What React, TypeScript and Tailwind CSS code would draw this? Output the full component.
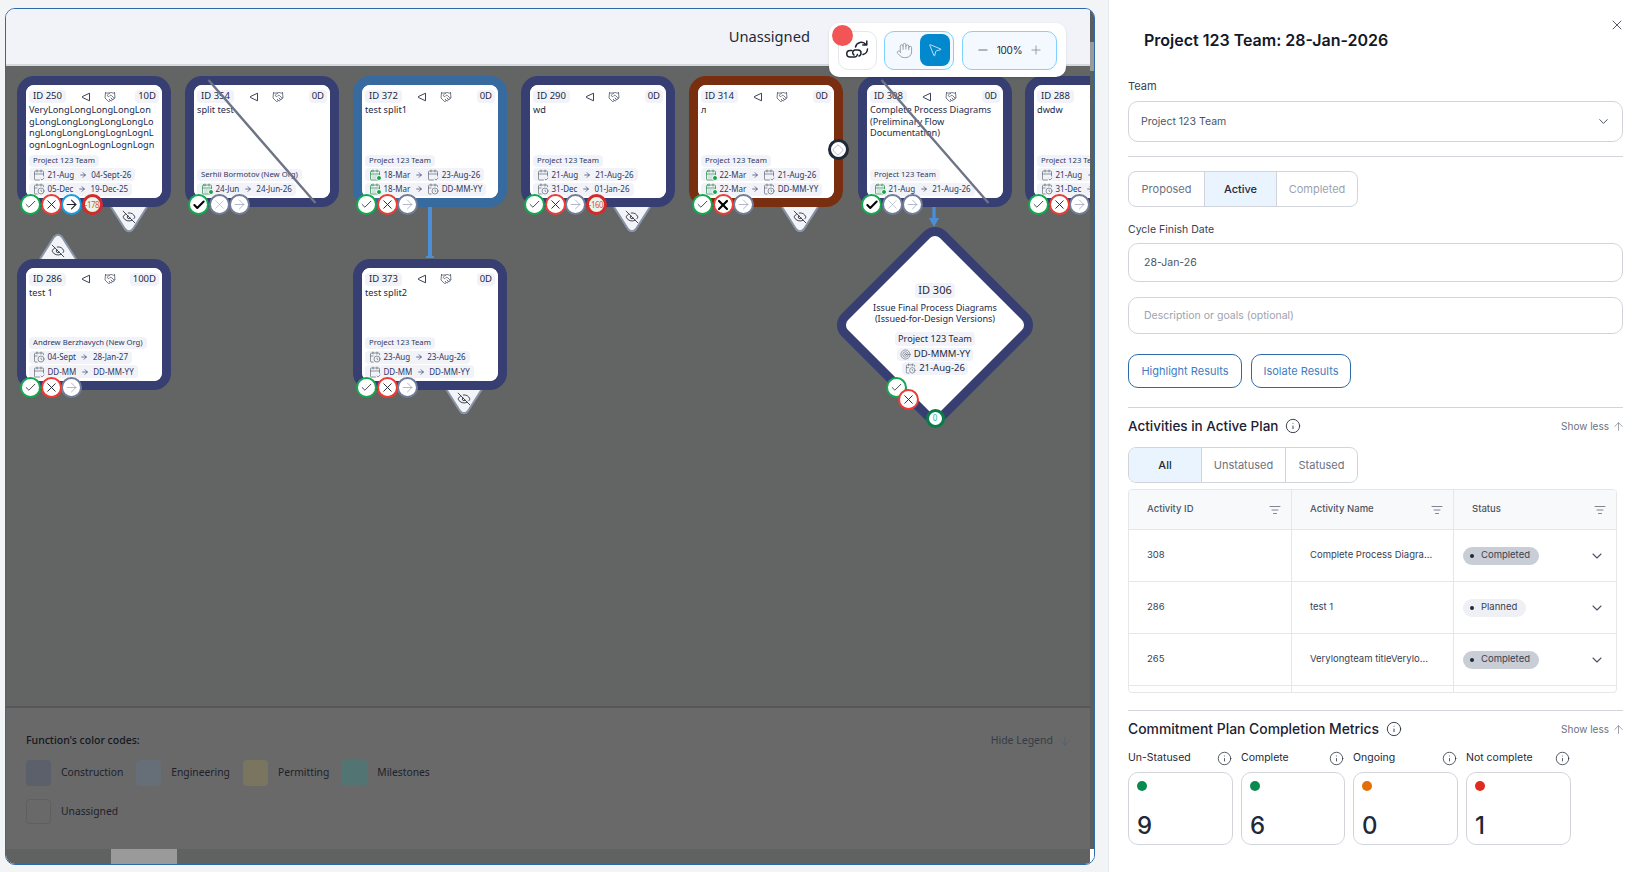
import React from "react";
import { Check, X, ArrowRight, EyeOff, Handshake, CalendarClock, CalendarCheck2, CalendarDays, Hand, MousePointer2, Minus, Plus, Info, ListFilter, ChevronDown, ArrowUp, ArrowDown, Target, Diamond } from "lucide-react";

type CircleKind = "check" | "checkBold" | "x" | "xBold" | "xGhost" | "arrow" | "arrowBlue" | "late";

function Circle({ kind, label }: { kind: CircleKind; label?: string }) {
  if (kind === "late")
    return (
      <div className="w-[21px] h-[21px] rounded-full border-[3px] border-[#d42a2a] bg-[#e6f7ea] flex items-center justify-center text-[8px] tracking-[-0.5px] whitespace-nowrap text-[#e5533d]">
        {label}
      </div>
    );
  const border =
    kind === "check" || kind === "checkBold"
      ? "border-[#12a850]"
      : kind === "x" || kind === "xBold"
        ? "border-[#ef3b33]"
        : kind === "arrowBlue"
          ? "border-[#0f9fe6]"
          : "border-[#717c96]";
  return (
    <div className={`w-[21px] h-[21px] rounded-full border-[2.5px] bg-white flex items-center justify-center ${border}`}>
      {kind === "check" && <Check size={13} strokeWidth={1.5} color="#1f2433" />}
      {kind === "checkBold" && <Check size={14} strokeWidth={3.5} color="#000" />}
      {kind === "x" && <X size={15} strokeWidth={1.5} color="#1f2433" />}
      {kind === "xBold" && <X size={16} strokeWidth={3.2} color="#000" />}
      {kind === "xGhost" && <X size={15} strokeWidth={1.3} color="#b8c0d2" />}
      {kind === "arrow" && <ArrowRight size={15} strokeWidth={1.4} color="#a3aec7" />}
      {kind === "arrowBlue" && <ArrowRight size={15} strokeWidth={1.7} color="#1f2433" />}
    </div>
  );
}

function Tag({ dir }: { dir: "down" | "up" }) {
  return (
    <div className="relative w-[38px] h-[26px]">
      <svg width="38" height="26" viewBox="0 0 38 26" className="absolute inset-0">
        {dir === "down" ? (
          <path d="M1 0 L15 22 Q19 26.5 23 22 L37 0 Z" fill="#f3f4f8" />
        ) : (
          <path d="M1 26 L15 4 Q19 -0.5 23 4 L37 26 Z" fill="#f3f4f8" />
        )}
        {dir === "down" ? (
          <path d="M1 0 L15 22 Q19 26.5 23 22 L37 0" fill="none" stroke="#8a94a8" strokeWidth="2" />
        ) : (
          <path d="M1 26 L15 4 Q19 -0.5 23 4 L37 26" fill="none" stroke="#8a94a8" strokeWidth="2" />
        )}
      </svg>
      <div className={`absolute left-[12px] ${dir === "down" ? "top-[3px]" : "top-[11px]"}`}>
        <EyeOff size={14} strokeWidth={1.4} color="#1f2433" />
      </div>
    </div>
  );
}

function TriIcon() {
  return (
    <svg width="10" height="10" viewBox="0 0 10 10" fill="none">
      <path d="M8.5 1.2 L1.3 4.6 Q0.8 5 1.3 5.4 L8.5 8.8 Z" stroke="#3b4256" strokeWidth="1" strokeLinejoin="round" />
    </svg>
  );
}

function DateIcon({ kind }: { kind: "gray" | "green" | "days" }) {
  if (kind === "green")
    return (
      <span className="relative inline-flex shrink-0">
        <CalendarDays size={12} strokeWidth={1.3} color="#15803d" />
        <span className="absolute right-[-1px] bottom-[0px] w-[6px] h-[6px] rounded-full bg-[#16a34a] border border-white" />
      </span>
    );
  if (kind === "days") return <CalendarClock size={12} strokeWidth={1.2} color="#4b5563" className="shrink-0" />;
  return <CalendarCheck2 size={12} strokeWidth={1.2} color="#4b5563" className="shrink-0" />;
}

type DateRow = { icon: "gray" | "green" | "days"; from: string; icon2?: "gray" | "green" | "days"; to: string };

function Chip({ children, className = "" }: { children: React.ReactNode; className?: string }) {
  return <span className={`inline-flex items-center bg-[#f1f3f8] rounded-[4px] ${className}`}>{children}</span>;
}

function DateChip({ row }: { row: DateRow }) {
  return (
    <Chip className="h-[13px] px-[4px] gap-[2.5px] text-[8px] text-[#2f3760] self-start whitespace-nowrap">
      <DateIcon kind={row.icon} />
      <span>{row.from}</span>
      <ArrowRight size={8} strokeWidth={2} color="#2f3760" className="mx-[2px]" />
      {row.icon2 && <DateIcon kind={row.icon2} />}
      <span>{row.to}</span>
    </Chip>
  );
}

type NodeProps = {
  x: number;
  y: number;
  id: number;
  dur: string;
  title: React.ReactNode;
  team: string;
  dates: DateRow[];
  border?: string;
  circles: { kind: CircleKind; label?: string }[];
  crossed?: boolean;
};

function ActivityNode({ x, y, id, dur, title, team, dates, border = "border-[#373f72]", circles, crossed }: NodeProps) {
  return (
    <div className="absolute w-[154px] h-[131px]" style={{ left: x - 6, top: y - 66 }}>
      <div className={`w-full h-full rounded-[17px] border-[9.5px] bg-white overflow-hidden ${border}`}>
        <div className="h-full flex flex-col px-[3px] pt-[5px] pb-[2.5px] rounded-[8px] bg-white">
          <div className="shrink-0 grid grid-cols-[1fr_auto_1fr] items-center h-[13px]">
            <div className="flex">
              <Chip className="h-[13px] px-[4px] text-[9.5px] text-[#23293f] whitespace-nowrap">ID {id}</Chip>
            </div>
            <div className="flex items-center gap-[13px] ml-[9px]">
              <TriIcon />
              <Handshake size={12} strokeWidth={1.4} color="#3b4256" />
            </div>
            <div className="flex justify-end">
              <Chip className="h-[13px] px-[3px] text-[9.5px] text-[#23293f]">{dur}</Chip>
            </div>
          </div>
          <div className="mt-[1px] text-[9.2px] leading-[11.7px] text-[#232a4a] whitespace-nowrap">{title}</div>
          <div className="mt-auto flex flex-col gap-[1.5px]">
            <Chip className="h-[12px] px-[4px] text-[7.7px] text-[#2f3760] self-start whitespace-nowrap">{team}</Chip>
            {dates.map((d, i) => (
              <DateChip key={i} row={d} />
            ))}
          </div>
        </div>
      </div>
      {crossed && (
        <svg className="absolute inset-0" width="154" height="131" viewBox="0 0 154 131">
          <line x1="23.5" y1="4" x2="130.5" y2="127" stroke="#6e7486" strokeWidth="2.4" />
        </svg>
      )}
      <div className="absolute left-[3px] top-[118px] flex -space-x-[0.5px]">
        {circles.map((c, i) => (
          <Circle key={i} kind={c.kind} label={c.label} />
        ))}
      </div>
    </div>
  );
}

const base: { kind: CircleKind }[] = [{ kind: "check" }, { kind: "x" }, { kind: "arrow" }];
const ghost: { kind: CircleKind }[] = [{ kind: "checkBold" }, { kind: "xGhost" }, { kind: "arrow" }];
const TEAM = "Project 123 Team";

function Tagged({ x, y, dir }: { x: number; y: number; dir: "down" | "up" }) {
  return (
    <div className="absolute" style={{ left: x - 6, top: y - 66 }}>
      <Tag dir={dir} />
    </div>
  );
}

function DiagramCanvas() {
  return (
    <div className="relative flex-1 bg-[#636564] overflow-hidden border-t-[2px] border-[#d5d8dd]" style={{ fontFamily: "'Noto Sans', sans-serif" }}>
      <Tagged x={110} y={207} dir="down" />
      <Tagged x={39} y={233} dir="up" />
      <Tagged x={445} y={389} dir="down" />
      <Tagged x={613} y={207} dir="down" />
      <Tagged x={781} y={207} dir="down" />

      <div className="absolute w-[4px] bg-[#4a8fd8]" style={{ left: 428 - 6, top: 207 - 66, height: 51 }} />
      <div className="absolute w-[8px] h-[2px] bg-[#4a8fd8]" style={{ left: 426 - 6, top: 256 - 66 }} />
      <svg className="absolute" width="12" height="24" viewBox="0 0 12 24" style={{ left: 928 - 6, top: 206 - 66 }}>
        <rect x="4.4" y="0" width="3.2" height="15" fill="#4a8fd8" />
        <path d="M1 12 L11 12 L6 21 Z" fill="#4a8fd8" />
      </svg>

      <ActivityNode
        x={17}
        y={76}
        id={250}
        dur="10D"
        title={
          <>
            VeryLongLongLongLongLon
            <br />
            gLongLongLongLongLongLo
            <br />
            ngLongLongLongLognLognL
            <br />
            ognLognLognLognLognLogn
          </>
        }
        team={TEAM}
        dates={[
          { icon: "gray", from: "21-Aug", to: "04-Sept-26" },
          { icon: "days", from: "05-Dec", to: "19-Dec-25" },
        ]}
        circles={[{ kind: "check" }, { kind: "x" }, { kind: "arrowBlue" }, { kind: "late", label: "-178" }]}
      />
      <ActivityNode
        x={185}
        y={76}
        id={354}
        dur="0D"
        title="split test"
        team="Serhii Bormotov (New Org)"
        dates={[{ icon: "green", from: "24-Jun", to: "24-Jun-26" }]}
        circles={ghost}
        crossed
      />
      <ActivityNode
        x={353}
        y={76}
        id={372}
        dur="0D"
        title="test split1"
        team={TEAM}
        border="border-[#376a9e]"
        dates={[
          { icon: "green", from: "18-Mar", icon2: "gray", to: "23-Aug-26" },
          { icon: "green", from: "18-Mar", icon2: "days", to: "DD-MM-YY" },
        ]}
        circles={base}
      />
      <ActivityNode
        x={521}
        y={76}
        id={290}
        dur="0D"
        title="wd"
        team={TEAM}
        dates={[
          { icon: "gray", from: "21-Aug", to: "21-Aug-26" },
          { icon: "days", from: "31-Dec", to: "01-Jan-26" },
        ]}
        circles={[{ kind: "check" }, { kind: "x" }, { kind: "arrow" }, { kind: "late", label: "-160" }]}
      />
      <ActivityNode
        x={689}
        y={76}
        id={314}
        dur="0D"
        title="л"
        team={TEAM}
        border="border-[#7a2e10]"
        dates={[
          { icon: "green", from: "22-Mar", icon2: "gray", to: "21-Aug-26" },
          { icon: "green", from: "22-Mar", icon2: "days", to: "DD-MM-YY" },
        ]}
        circles={[{ kind: "check" }, { kind: "xBold" }, { kind: "arrow" }]}
      />
      <div
        className="absolute w-[21px] h-[21px] rounded-full border-[3px] border-[#1f2937] bg-white flex items-center justify-center"
        style={{ left: 827.5 - 6, top: 139 - 66 }}
      >
        <Diamond size={12} strokeWidth={1.2} color="#8a94a8" />
      </div>
      <ActivityNode
        x={858}
        y={76}
        id={308}
        dur="0D"
        title={
          <>
            Complete Process Diagrams
            <br />
            (Preliminary Flow
            <br />
            Documentation)
          </>
        }
        team={TEAM}
        dates={[{ icon: "green", from: "21-Aug", to: "21-Aug-26" }]}
        circles={ghost}
        crossed
      />
      <ActivityNode
        x={1025}
        y={76}
        id={288}
        dur="0D"
        title="dwdw"
        team={TEAM}
        dates={[
          { icon: "gray", from: "21-Aug", to: "21-Aug-26" },
          { icon: "days", from: "31-Dec", to: "01-Jan-26" },
        ]}
        circles={base}
      />
      <ActivityNode
        x={17}
        y={258.5}
        id={286}
        dur="100D"
        title="test 1"
        team="Andrew Berzhavych (New Org)"
        dates={[
          { icon: "days", from: "04-Sept", to: "28-Jan-27" },
          { icon: "gray", from: "DD-MM", to: "DD-MM-YY" },
        ]}
        circles={base}
      />
      <ActivityNode
        x={353}
        y={258.5}
        id={373}
        dur="0D"
        title="test split2"
        team={TEAM}
        dates={[
          { icon: "days", from: "23-Aug", to: "23-Aug-26" },
          { icon: "gray", from: "DD-MM", to: "DD-MM-YY" },
        ]}
        circles={base}
      />

      {/* milestone */}
      <div className="absolute" style={{ left: 935 - 74 - 6, top: 325 - 74 - 66 }}>
        <div className="w-[148px] h-[148px] rotate-45 rounded-[16px] border-[9px] border-[#373f72] bg-white" />
      </div>
      <div
        className="absolute w-[150px] flex flex-col items-center text-[#23293f]"
        style={{ left: 935 - 75 - 6, top: 283 - 66 }}
      >
        <Chip className="h-[15px] px-[3px] text-[11px]">ID 306</Chip>
        <div className="mt-[4px] text-[9.1px] leading-[11px] text-center text-[#232a4a] whitespace-nowrap">
          Issue Final Process Diagrams
          <br />
          (Issued-for-Design Versions)
        </div>
        <Chip className="mt-[8px] h-[14px] px-[3px] text-[9.2px]">{TEAM}</Chip>
        <Chip className="mt-[1.5px] h-[13px] px-[3px] gap-[3px] text-[9.5px]">
          <Target size={11} strokeWidth={1.2} color="#4b5563" />
          DD-MMM-YY
        </Chip>
        <Chip className="mt-[1.5px] h-[13px] px-[3px] gap-[3px] text-[9.5px]">
          <CalendarClock size={11} strokeWidth={1.2} color="#4b5563" />
          21-Aug-26
        </Chip>
      </div>
      <div className="absolute" style={{ left: 885.5 - 6, top: 376.5 - 66 }}>
        <Circle kind="check" />
      </div>
      <div className="absolute" style={{ left: 897.5 - 6, top: 388.5 - 66 }}>
        <Circle kind="x" />
      </div>
      <div
        className="absolute w-[19px] h-[19px] rounded-full border-[3px] border-[#0b7a4b] bg-white flex items-center justify-center text-[8px] text-[#14b8a6]"
        style={{ left: 925.5 - 6, top: 408.5 - 66 }}
      >
        0
      </div>
    </div>
  );
}

function LegendSwatch({ color, label }: { color: string; label: string }) {
  return (
    <div className="flex items-center gap-[10px] mr-[13px]">
      <div className="w-[25px] h-[26px] rounded-[4px]" style={{ background: color }} />
      <span className="text-[10.3px] text-[#1d212b]">{label}</span>
    </div>
  );
}

function Legend() {
  return (
    <div className="h-[143px] bg-[#696969] border-t-[2px] border-[#565659] pl-[20px] pr-[18px] pt-[25px]" style={{ fontFamily: "'Noto Sans', sans-serif" }}>
      <div className="flex items-center justify-between h-[16px]">
        <span className="text-[10.5px] font-medium text-[#14171f]">Function's color codes:</span>
        <span className="flex items-center gap-[5px] text-[10.5px] text-[#363c47]">
          Hide Legend <ArrowDown size={14} strokeWidth={1.2} color="#4d5c7c" />
        </span>
      </div>
      <div className="mt-[11px] flex items-center">
        <LegendSwatch color="#5c606a" label="Construction" />
        <LegendSwatch color="#666f78" label="Engineering" />
        <LegendSwatch color="#7a755f" label="Permitting" />
        <LegendSwatch color="#527573" label="Milestones" />
      </div>
      <div className="mt-[13px] flex items-center gap-[10px]">
        <div className="w-[25px] h-[25px] rounded-[4px] border border-[#5f5f5f]" />
        <span className="text-[10.3px] text-[#1d212b]">Unassigned</span>
      </div>
    </div>
  );
}

function Toolbar() {
  return (
    <div className="absolute left-[823px] top-[14px] w-[237px] h-[54px] rounded-[10px] bg-white shadow-sm flex items-center pl-[9px] gap-[7px]">
      <div className="relative w-[39px] h-[39px] rounded-[10px] border border-[#e5e7eb] flex items-center justify-center">
        <svg width="24" height="22" viewBox="0 0 24 22" fill="none" stroke="#1f2433" strokeWidth="1.5" strokeLinecap="round" strokeLinejoin="round">
          <path d="M6 11.5 H4 A3.2 3.2 0 0 0 4 18 H8.5 A3 3 0 0 0 11.4 15.5" />
          <path d="M8 16 A2.8 2.8 0 0 1 8.5 11 H12 A3 3 0 0 1 15 14 A3 3 0 0 1 13 17" />
          <path d="M9.5 8 A6 6 0 0 1 20 5.5 M20.8 2 V6 H16.8" />
          <path d="M21.5 10 A6 6 0 0 1 17 15.5" />
        </svg>
        <div className="absolute -left-[7px] -top-[7px] w-[21px] h-[21px] rounded-full bg-[#f25555]" />
      </div>
      <div className="w-[70px] h-[39px] rounded-[10px] border border-[#7dd3fc] bg-[#f3f9ff] flex items-center justify-between pl-[11px] pr-[3px]">
        <Hand size={17} strokeWidth={1.2} color="#8b919c" />
        <div className="w-[30px] h-[32px] rounded-[8px] bg-[#0288cc] flex items-center justify-center">
          <MousePointer2 size={16} strokeWidth={1.3} color="#dbeafe" />
        </div>
      </div>
      <div className="ml-[1px] w-[95px] h-[39px] rounded-[10px] border border-[#7dd3fc] bg-[#f3f9ff] flex items-center justify-between px-[13px]">
        <Minus size={14} strokeWidth={1.8} color="#6b7280" />
        <span className="text-[10px] tracking-tight text-[#1f2433]">100%</span>
        <Plus size={14} strokeWidth={1.5} color="#8b919c" />
      </div>
    </div>
  );
}

function Frame() {
  return (
    <div className="relative w-[1090px] h-[857px] mt-[8px] ml-[5px] shrink-0 rounded-[10px] border border-[#2e6aa8] overflow-hidden flex bg-white">
      <div className="flex-1 min-w-0 flex flex-col">
        <div className="h-[55px] shrink-0 bg-[#f1f3f8] flex justify-end items-center pr-[280px]" style={{ fontFamily: "'Noto Sans', sans-serif" }}>
          <span className="text-[14.7px] text-[#1f2937]">Unassigned</span>
        </div>
        <DiagramCanvas />
        <Legend />
        <div className="h-[15px] shrink-0 bg-[#606261] pl-[105px]">
          <div className="w-[66px] h-full bg-[#9a9a9a]" />
        </div>
      </div>
      <div className="w-[4px] shrink-0 flex flex-col">
        <div className="flex-1 bg-[#5c5e5e] flex flex-col">
          <div className="h-[33px] bg-[#5c5e5e]" />
          <div className="h-[29px] bg-[#9a9a9a]" />
        </div>
        <div className="h-[15px] bg-white" />
      </div>
      <Toolbar />
    </div>
  );
}

function Segments({ items, active, widths }: { items: string[]; active: string; widths: string[] }) {
  return (
    <div className="flex w-[230px] h-[36px] rounded-[8px] border border-[#d1d5db] overflow-hidden text-[11px]">
      {items.map((it, i) => (
        <div
          key={it}
          className={`flex items-center justify-center ${widths[i]} ${i > 0 ? "border-l border-[#d1d5db]" : ""} ${
            it === active ? "bg-[#eaf4fe] text-[#1f2937] font-medium" : it === "Completed" ? "text-[#9ca3af]" : "text-[#6b7280]"
          }`}
        >
          {it}
        </div>
      ))}
    </div>
  );
}

function SectionHead({ title, size }: { title: string; size: string }) {
  return (
    <div className="flex items-center justify-between h-[16px]">
      <div className="flex items-center gap-[7px]">
        <span className={`${size} font-medium text-[#1a2233]`}>{title}</span>
        <Info size={16} strokeWidth={1.3} color="#1f2937" />
      </div>
      <div className="flex items-center gap-[3px] -mr-[2px] text-[10px] text-[#6b7280]">
        Show less <ArrowUp size={13} strokeWidth={1.2} color="#6b7280" />
      </div>
    </div>
  );
}

function StatusRow({ id, name, status, dark }: { id: string; name: string; status: string; dark?: boolean }) {
  return (
    <div className="grid grid-cols-[163px_162px_1fr] border-t border-[#e5e7eb] h-[52px] text-[9.5px] text-[#374151]">
      <div className="flex items-center pl-[18px] border-r border-[#e5e7eb]">{id}</div>
      <div className="flex items-center pl-[18px] border-r border-[#e5e7eb] whitespace-nowrap">{name}</div>
      <div className="flex items-center justify-between pl-[9px] pr-[11px]">
        <span className={`flex items-center gap-[7px] h-[18px] pl-[7px] pr-[9px] rounded-full text-[9.5px] ${dark ? "bg-[#c9ced6]" : "bg-[#eef0f4]"}`}>
          <span className="w-[4px] h-[4px] rounded-full bg-[#1f2937]" />
          {status}
        </span>
        <ChevronDown size={16} strokeWidth={1.6} color="#4b5563" />
      </div>
    </div>
  );
}

function Metric({ label, value, dot, w }: { label: string; value: string; dot: string; w: string }) {
  return (
    <div className={w}>
      <div className="flex items-center justify-between h-[16px] pr-[1px] text-[10.5px] text-[#1f2937]">
        {label}
        <Info size={15} strokeWidth={1.2} color="#1f2937" />
      </div>
      <div className="mt-[6px] h-[73px] rounded-[10px] border border-[#d1d5db] pl-[8px] pt-[8px]">
        <div className="w-[10px] h-[10px] rounded-full" style={{ background: dot }} />
        <div className="mt-[21px] text-[24px] leading-[28px] font-medium text-[#1f2937]">{value}</div>
      </div>
    </div>
  );
}

function Panel() {
  return (
    <div className="w-[529px] ml-[13px] h-[872px] bg-white relative pl-[19px] pr-[14px] border-l border-[#e5e7eb] overflow-hidden">
      <div className="pl-[16px] pt-[29px] h-[71px]">
        <div className="text-[16px] leading-[22px] font-semibold text-[#111827]">Project 123 Team: 28-Jan-2026</div>
      </div>
      <X size={16} strokeWidth={1.3} color="#374151" className="absolute right-[12px] top-[17px]" />
      <div className="text-[11px] leading-[14px] text-[#374151] pt-[8px]">Team</div>
      <div className="mt-[8px] h-[41px] rounded-[10px] border border-[#d1d5db] flex items-center justify-between pl-[12px] pr-[11px] text-[10.5px] text-[#4b5563]">
        Project 123 Team <ChevronDown size={15} strokeWidth={1.6} color="#4b5563" />
      </div>
      <div className="mt-[14px] border-t border-[#d1d5db]" />
      <div className="mt-[14px]">
        <Segments items={["Proposed", "Active", "Completed"]} active="Active" widths={["w-[75px]", "w-[72px]", "flex-1"]} />
      </div>
      <div className="mt-[16px] text-[10.5px] leading-[14px] text-[#374151]">Cycle Finish Date</div>
      <div className="mt-[6px] h-[39px] rounded-[10px] border border-[#d1d5db] flex items-center pl-[15px] text-[10.5px] text-[#4b5563]">
        28-Jan-26
      </div>
      <div className="mt-[15px] h-[37px] rounded-[10px] border border-[#d1d5db] flex items-center pl-[15px] text-[10.5px] text-[#9ca3af]">
        Description or goals (optional)
      </div>
      <div className="mt-[20px] flex gap-[9px]">
        <div className="w-[114px] h-[34px] rounded-[10px] border border-[#2e6aa8] flex items-center justify-center text-[11px] text-[#3f7cc0]">
          Highlight Results
        </div>
        <div className="w-[100px] h-[34px] rounded-[10px] border border-[#2e6aa8] flex items-center justify-center text-[11px] text-[#3f7cc0]">
          Isolate Results
        </div>
      </div>
      <div className="mt-[19px] border-t border-[#d1d5db]" />
      <div className="mt-[10px]">
        <SectionHead title="Activities in Active Plan" size="text-[13.5px]" />
      </div>
      <div className="mt-[13px]">
        <Segments items={["All", "Unstatused", "Statused"]} active="All" widths={["w-[72px]", "w-[84px]", "flex-1"]} />
      </div>
      <div className="mt-[6px] w-[489px] h-[204px] rounded-[4px] border border-[#e5e7eb] overflow-hidden">
        <div className="grid grid-cols-[163px_162px_1fr] h-[39px] bg-[#f8f9fb] text-[9.5px] text-[#4b5563] font-medium">
          {["Activity ID", "Activity Name", "Status"].map((h, i) => (
            <div key={h} className={`flex items-center justify-between ${i === 2 ? "pl-[18px]" : "pl-[18px] border-r border-[#e5e7eb]"} pr-[10px]`}>
              {h} <ListFilter size={12} strokeWidth={1.4} color="#4b5563" />
            </div>
          ))}
        </div>
        <StatusRow id="308" name="Complete Process Diagra..." status="Completed" dark />
        <StatusRow id="286" name="test 1" status="Planned" />
        <StatusRow id="265" name="Verylongteam titleVerylo..." status="Completed" dark />
        <div className="grid grid-cols-[163px_162px_1fr] border-t border-[#e5e7eb] h-[8px]">
          <div className="border-r border-[#e5e7eb]" />
          <div className="border-r border-[#e5e7eb]" />
        </div>
      </div>
      <div className="mt-[17px] border-t border-[#d1d5db]" />
      <div className="mt-[10px]">
        <SectionHead title="Commitment Plan Completion Metrics" size="text-[13.9px]" />
      </div>
      <div className="mt-[13px] flex gap-[8px]">
        <Metric label="Un-Statused" value="9" dot="#0b8a4f" w="w-[105px]" />
        <Metric label="Complete" value="6" dot="#0b8a4f" w="w-[104px]" />
        <Metric label="Ongoing" value="0" dot="#e36f06" w="w-[105px]" />
        <Metric label="Not complete" value="1" dot="#e02b20" w="w-[105px]" />
      </div>
    </div>
  );
}

export default function App() {
  return (
    <div className="flex w-[1637px] h-[872px] overflow-hidden bg-[#f3f4f6]" style={{ fontFamily: "Inter, 'Noto Sans', sans-serif" }}>
      <Frame />
      <Panel />
    </div>
  );
}
